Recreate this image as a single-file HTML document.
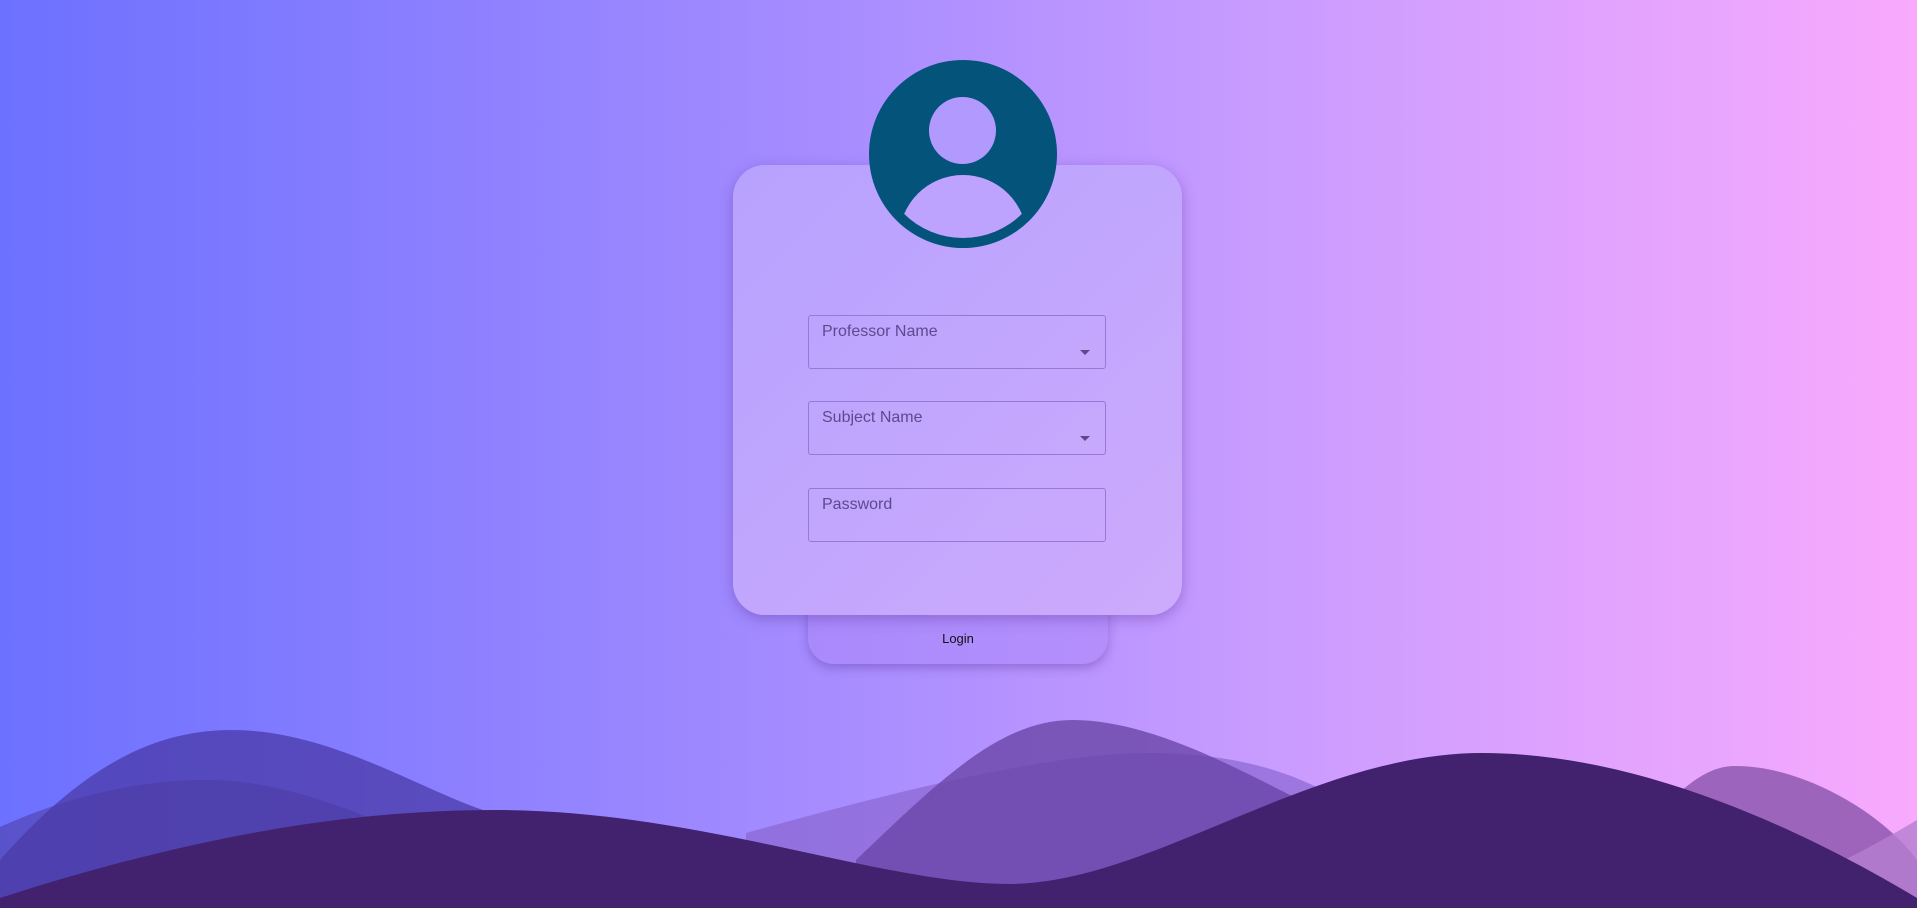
<!DOCTYPE html>
<html><head><style>
html,body{margin:0;padding:0;}
body{width:1917px;height:908px;overflow:hidden;position:relative;background:linear-gradient(90deg,#6c71ff 0%,#a28aff 40%,#c79bff 65%,#f8aafd 100%);font-family:"Liberation Sans",Roboto,sans-serif;}
svg.w{position:absolute;left:0;top:0}
.card{position:absolute;left:733px;top:165px;width:449px;height:450px;border-radius:32px;background:linear-gradient(135deg,#b6a2fe,#cdaafc);box-shadow:0 4px 14px rgba(80,40,140,.35);z-index:3}
.btn{position:absolute;left:808px;top:600px;width:300px;height:64px;border-radius:0 0 26px 26px;background:linear-gradient(90deg,#a98afc,#b48ffc);box-shadow:0 4px 10px rgba(80,40,140,.35);z-index:2;text-align:center;font-size:13px;color:#111;line-height:78px}
.in{position:absolute;left:75px;width:298px;height:54px;border:1px solid #9579d6;border-radius:3px;box-sizing:border-box}
.in span{position:absolute;left:13px;top:7px;font-size:16px;color:#5d4a8e}
.in i{position:absolute;right:15px;top:34px;width:0;height:0;border-left:5px solid transparent;border-right:5px solid transparent;border-top:5px solid #5e4a8a}
.av{position:absolute;left:869px;top:60px;width:188px;height:188px;border-radius:50%;background:#04537b;z-index:4;overflow:hidden}
</style></head><body>
<svg class="w" width="1917" height="908" viewBox="0 0 1917 908">
<path d="M0 860 C80 770 150 730 232 730 C330 730 420 790 489 812 L489 908 L0 908Z" fill="#4a3aa8" opacity=".75"/>
<path d="M0 827 C60 800 130 780 208 780 C300 780 400 830 460 860 L460 908 L0 908Z" fill="#4b3aa0" opacity=".55"/>
<path d="M746 833 C900 790 1050 753 1149 753 C1240 753 1300 775 1340 800 L1340 908 L746 908Z" fill="#8a66d2" opacity=".7"/>
<path d="M856 860 C940 780 1000 720 1073 720 C1150 720 1240 770 1300 800 L1300 908 L856 908Z" fill="#6a46a8" opacity=".8"/>
<path d="M1650 820 C1690 780 1710 766 1736 766 C1800 766 1880 810 1917 860 L1917 908 L1650 908Z" fill="#8e58b0" opacity=".85"/>
<path d="M1780 890 C1850 860 1900 830 1917 820 L1917 908 L1780 908Z" fill="#b57ed0" opacity=".8"/>
<path d="M0 898 C180 840 340 810 495 810 C700 810 880 884 1009 884 C1150 884 1310 753 1482 753 C1650 753 1820 840 1917 898 L1917 908 L0 908Z" fill="#42216e"/>
</svg>
<div class="av">
<div style="position:absolute;left:60px;top:37px;width:67px;height:67px;border-radius:50%;background:#b299fd"></div>
<div style="position:absolute;left:10px;top:10px;width:168px;height:168px;border-radius:50%;overflow:hidden">
<div style="position:absolute;left:20px;top:105px;width:128px;height:128px;border-radius:50%;background:#bda3fd"></div>
</div>
</div>
<div class="card">
<div class="in" style="top:150px"><span>Professor Name</span><i></i></div>
<div class="in" style="top:236px"><span>Subject Name</span><i></i></div>
<div class="in" style="top:323px"><span>Password</span></div>
</div>
<div class="btn">Login</div>
</body></html>
